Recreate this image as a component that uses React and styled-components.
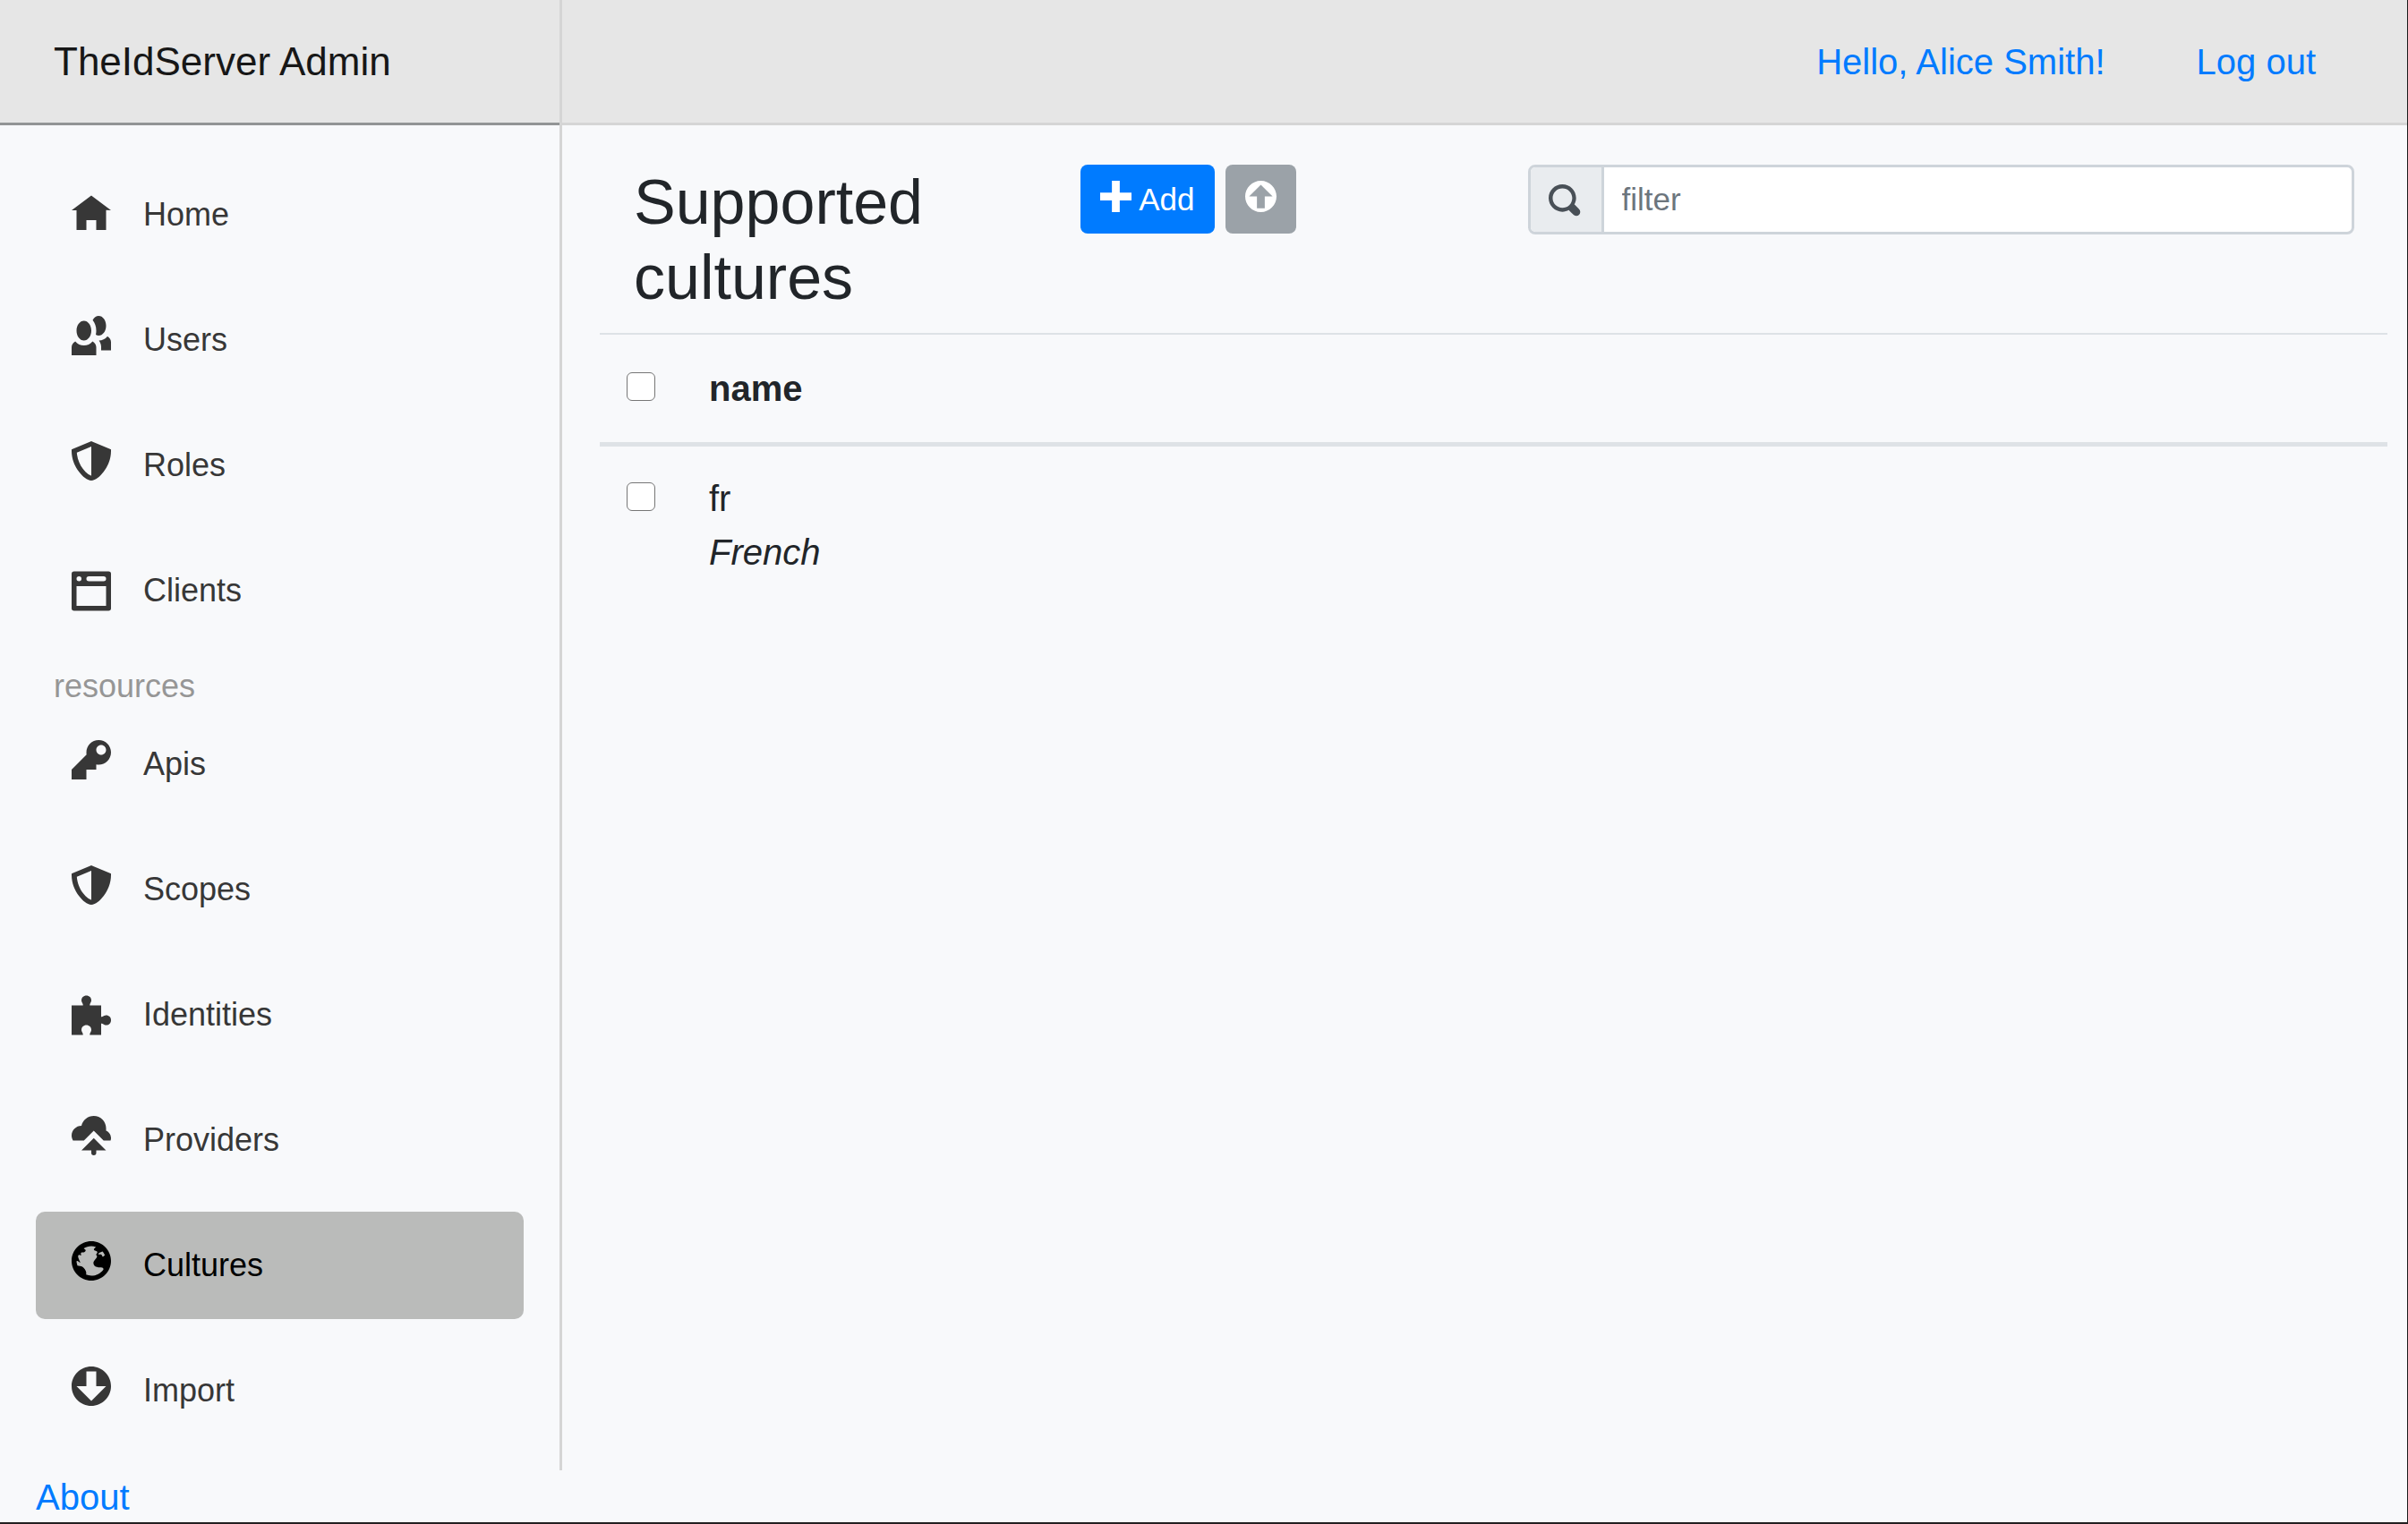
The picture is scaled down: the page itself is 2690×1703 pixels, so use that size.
import React from "react";
import styled, { createGlobalStyle } from "styled-components";

const ICONS = {
  home: "M4 1l-4 3h1v4h2v-2h2v2h2v-4.03l1 .03-4-3z",
  people:
    "M5.5 0c-.51 0-.95.35-1.22.88.45.54.72 1.28.72 2.13 0 .29-.03.55-.09.81.19.11.38.19.59.19.83 0 1.5-.9 1.5-2s-.67-2-1.5-2zm-3 1c-.83 0-1.5.9-1.5 2s.67 2 1.5 2 1.5-.9 1.5-2-.67-2-1.5-2zm4.75 3.16c-.43.51-1.02.82-1.69.84.27.38.44.84.44 1.34v.66h2v-1.66c0-.52-.31-.97-.75-1.19zm-6.5 1c-.44.22-.75.67-.75 1.19v1.66h5v-1.66c0-.52-.31-.97-.75-1.19-.45.53-1.06.84-1.75.84s-1.3-.32-1.75-.84z",
  shield:
    "M4 0l-.19.09-3.5 1.47-.31.13v.31c0 1.66.67 3.12 1.47 4.19.4.53.83.97 1.25 1.28.42.31.83.53 1.28.53.46 0 .86-.22 1.28-.53.42-.31.85-.75 1.25-1.28.8-1.07 1.47-2.53 1.47-4.19v-.31l-.31-.13-3.5-1.47-.19-.09zm0 1.09v5.91c-.04 0-.33-.07-.66-.31s-.71-.63-1.06-1.09c-.64-.85-1.14-2.03-1.22-3.28l2.94-1.22z",
  browser:
    "M.5 1h7a.5.5 0 0 1 .5.5v7a.5.5 0 0 1-.5.5h-7a.5.5 0 0 1-.5-.5v-7a.5.5 0 0 1 .5-.5zM1.5 2a.5.5 0 0 0 0 1 .5.5 0 0 0 0-1zM3.5 2a.5.5 0 0 0 0 1h3a.5.5 0 0 0 0-1zM1 4v4h6v-4z",
  key: "M5.5 0c-1.38 0-2.5 1.12-2.5 2.5 0 .16 0 .32.03.47l-3.03 3.03v2h3v-2h2v-1l.03-.03c.15.03.31.03.47.03 1.38 0 2.5-1.12 2.5-2.5s-1.12-2.5-2.5-2.5zm.5 1c.55 0 1 .45 1 1s-.45 1-1 1-1-.45-1-1 .45-1 1-1z",
  puzzle:
    "M3 1c-.28 0-.54.1-.72.28-.18.18-.28.44-.28.72 0 .28.18.48.28.72.03.06.03.16.03.28h-2.31v6h2.31c0-.12-.01-.22-.03-.28-.1-.24-.28-.44-.28-.72 0-.28.1-.54.28-.72.18-.18.44-.28.72-.28.28 0 .54.1.72.28.18.18.28.44.28.72 0 .28-.18.48-.28.72-.03.06-.03.16-.03.28h2.31v-2.31c.12 0 .22.01.28.03.24.1.44.28.72.28.28 0 .54-.1.72-.28.18-.18.28-.44.28-.72 0-.28-.1-.54-.28-.72-.18-.18-.44-.28-.72-.28-.28 0-.48.18-.72.28-.06.03-.16.03-.28.03v-2.31h-2.31c0-.12.01-.22.03-.28.1-.24.28-.44.28-.72 0-.28-.1-.54-.28-.72-.18-.18-.44-.28-.72-.28z",
  cloudUpload:
    "M4.5 0c-1.21 0-2.27.86-2.5 2-1.1 0-2 .9-2 2 0 .37.11.71.28 1h2.22l2-2 2 2h1.41c.06-.16.09-.32.09-.5 0-.65-.42-1.29-1-1.5v-.5c0-1.38-1.12-2.5-2.5-2.5zm0 4.5l-2.5 2.5h2v.5a.5.5 0 1 0 1 0v-.5h2l-2.5-2.5z",
  globe:
    "M4 0c-2.2 0-4 1.8-4 4s1.8 4 4 4 4-1.8 4-4-1.8-4-4-4zm0 1c.33 0 .64.09.94.19-.21.2-.45.38-.41.56.04.18.69.13.69.5 0 .27-.42.35-.13.66.35.35-.64.98-.66 1.44-.03.83.84.97 1.53.97.42 0 .53.2.5.44-.54.77-1.46 1.25-2.47 1.25-.38 0-.73-.09-1.06-.22.22-.44-.28-1.31-.75-1.59-.23-.23-.72-.14-1-.25-.09-.27-.18-.54-.19-.84.03-.05.08-.09.16-.09.19 0 .45.38.59.34.18-.04-.74-1.31-.31-1.56.2-.12.6.39.47-.16-.12-.51.36-.28.66-.41.26-.11.45-.41.13-.59-.06-.03-.13-.1-.22-.19.45-.27.97-.44 1.53-.44zm2.31 1.09c.18.22.32.46.44.72 0 .01 0 .02 0 .03-.04.07-.11.11-.22.22-.28.28-.32-.21-.44-.31-.13-.12-.6.02-.66-.13-.07-.18.5-.42.88-.53z",
  arrowDown:
    "M4 0c-2.2 0-4 1.8-4 4s1.8 4 4 4 4-1.8 4-4-1.8-4-4-4zm-1 1h2v3h2l-3 3-3-3h2v-3z",
  arrowUp:
    "M4 0c-2.2 0-4 1.8-4 4s1.8 4 4 4 4-1.8 4-4-1.8-4-4-4zm0 1l3 3h-2v3h-2v-3h-2l3-3z",
  plus: "M3 0v3h-3v2h3v3h2v-3h3v-2h-3v-3h-2z",
  search:
    "M3.5 0c-1.93 0-3.5 1.57-3.5 3.5s1.57 3.5 3.5 3.5c.59 0 1.17-.14 1.66-.41a1 1 0 0 0 .13.13l1 1a1.02 1.02 0 1 0 1.44-1.44l-1-1a1 1 0 0 0-.16-.13c.27-.49.44-1.06.44-1.66 0-1.93-1.55-3.5-3.5-3.5zm.03 1c1.39 0 2.5 1.11 2.5 2.5 0 .66-.24 1.27-.66 1.72-.01.01-.02.02-.03.03a1 1 0 0 0-.13.13c-.44.4-1.04.63-1.69.63-1.39 0-2.5-1.11-2.5-2.5s1.11-2.5 2.5-2.5z",
};

const GlobalStyle = createGlobalStyle`
  *, *::before, *::after { box-sizing: border-box; }
  body {
    margin: 0;
    background: #f8f9fb;
    color: #212529;
    font-family: "Liberation Sans", Arial, sans-serif;
    font-size: 40px;
    line-height: 60px;
  }
`;

const Glyph = styled.svg`
  display: block;
  flex: none;
  width: ${(p) => p.$size}px;
  height: ${(p) => p.$size}px;
  overflow: visible;
  fill: currentColor;
`;

function Icon({ name, size = 35 }) {
  return (
    <Glyph $size={size} viewBox="0 0 8 8" aria-hidden="true">
      <path d={ICONS[name]} />
    </Glyph>
  );
}

const Page = styled.div`
  display: flex;
  flex-direction: column;
  min-height: 100vh;
  border-right: 1px solid #1b1b1b;
  border-bottom: 2px solid #231f20;
`;

const Shell = styled.div`
  display: grid;
  grid-template-columns: 628px 1fr;
  flex: 1;
`;

const Sidebar = styled.aside`
  border-right: 3px solid #d5d5d5;
`;

const Brand = styled.div`
  display: flex;
  align-items: center;
  height: 140px;
  padding-left: 60px;
  background: #e6e6e6;
  border-bottom: 3px solid #929495;
`;

const BrandLink = styled.a`
  color: #171717;
  font-size: 44px;
  text-decoration: none;
`;

const Nav = styled.nav`
  padding: 40px 40px 28px;
`;

const NavList = styled.ul`
  display: flex;
  flex-direction: column;
  gap: 20px;
  margin: 0;
  padding: 0;
  list-style: none;
`;

const NavTitle = styled.h2`
  margin: 20px 0 0;
  padding-left: 20px;
  color: #969696;
  font-size: 36px;
  font-weight: 400;
  line-height: 54px;
`;

const NavLink = styled.a`
  display: flex;
  align-items: center;
  height: 120px;
  padding: 0 40px;
  gap: 36px;
  border-radius: 10px;
  background: ${(p) => (p.$active ? "#babbba" : "transparent")};
  color: ${(p) => (p.$active ? "#000" : "#373737")};
  font-size: 36px;
  text-decoration: none;

  svg {
    margin-bottom: 10px;
  }
`;

const Main = styled.main`
  min-width: 0;
`;

const TopBar = styled.header`
  display: flex;
  align-items: center;
  justify-content: flex-end;
  gap: 102px;
  height: 140px;
  padding-right: 102px;
  background: #e6e6e6;
  border-bottom: 3px solid #d5d5d5;
`;

const TextLink = styled.a`
  color: #007bff;
  text-decoration: none;
`;

const Content = styled.div`
  padding: 44px 22px 44px 42px;
`;

const Toolbar = styled.div`
  display: grid;
  grid-template-columns: 1fr 1fr 2fr;
  align-items: start;
  margin-bottom: 20px;
`;

const ToolbarCell = styled.div`
  display: flex;
  gap: 12px;
  padding: 0 37px 0 38px;
`;

const Title = styled.h1`
  margin: 0;
  font-size: 70px;
  font-weight: 400;
  line-height: 84px;
`;

const Button = styled.button`
  display: flex;
  align-items: center;
  gap: 8px;
  height: 77px;
  padding: 0 22px;
  border: 0;
  border-radius: 8px;
  background: ${(p) => (p.$primary ? "#007bff" : "#9ba2a8")};
  color: #fff;
  font: inherit;
  font-size: 35px;

  svg {
    margin-bottom: 6px;
  }
`;

const FilterGroup = styled.div`
  display: flex;
  flex: 1;
  height: 78px;
  overflow: hidden;
  border: 3px solid #ced4da;
  border-radius: 8px;
  background: #fff;
`;

const FilterLabel = styled.label`
  display: flex;
  align-items: center;
  padding: 0 24px 0 20px;
  border-right: 3px solid #ced4da;
  background: #e9ecef;
  color: #495057;
`;

const FilterInput = styled.input`
  flex: 1;
  min-width: 0;
  padding: 0 20px;
  border: 0;
  outline: 0;
  background: transparent;
  color: #495057;
  font: inherit;
  font-size: 35px;

  &::placeholder {
    color: #6c757d;
    opacity: 1;
  }
`;

const Table = styled.table`
  width: 100%;
  border-collapse: separate;
  border-spacing: 0;
`;

const HeadCell = styled.th`
  width: ${(p) => (p.$narrow ? "92px" : "auto")};
  padding: 30px;
  border-top: 2px solid #dee2e6;
  border-bottom: 5px solid #dee2e6;
  text-align: left;
  vertical-align: top;
`;

const Cell = styled.td`
  padding: 28px 30px;
  vertical-align: top;
`;

const CheckBox = styled.input`
  appearance: none;
  display: block;
  width: 32px;
  height: 32px;
  margin: 12px 0 0;
  border: 1px solid #767676;
  border-radius: 6px;
  background: #fff;

  &:checked {
    background: #007bff;
  }
`;

const Footer = styled.footer`
  height: 58px;
  padding-left: 40px;
`;

const mainItems = [
  ["Home", "home"],
  ["Users", "people"],
  ["Roles", "shield"],
  ["Clients", "browser"],
];

const resourceItems = [
  ["Apis", "key"],
  ["Scopes", "shield"],
  ["Identities", "puzzle"],
  ["Providers", "cloudUpload"],
  ["Cultures", "globe"],
  ["Import", "arrowDown"],
];

const cultures = [{ id: "fr", name: "French" }];

function NavItems({ items, active }) {
  return (
    <NavList>
      {items.map(([label, icon]) => (
        <li key={label}>
          <NavLink
            href="#"
            $active={label === active}
            aria-current={label === active ? "page" : undefined}
          >
            <Icon name={icon} size={44} />
            {label}
          </NavLink>
        </li>
      ))}
    </NavList>
  );
}

export default function App() {
  return (
    <>
      <GlobalStyle />
      <Page>
        <Shell>
          <Sidebar>
            <Brand>
              <BrandLink href="#">TheIdServer Admin</BrandLink>
            </Brand>
            <Nav>
              <NavItems items={mainItems} active="Cultures" />
              <NavTitle>resources</NavTitle>
              <NavItems items={resourceItems} active="Cultures" />
            </Nav>
          </Sidebar>
          <Main>
            <TopBar>
              <TextLink href="#">Hello, Alice Smith!</TextLink>
              <TextLink href="#">Log out</TextLink>
            </TopBar>
            <Content>
              <Toolbar>
                <ToolbarCell>
                  <Title>Supported cultures</Title>
                </ToolbarCell>
                <ToolbarCell>
                  <Button type="button" $primary>
                    <Icon name="plus" />
                    Add
                  </Button>
                  <Button type="button" aria-label="Export">
                    <Icon name="arrowUp" />
                  </Button>
                </ToolbarCell>
                <ToolbarCell>
                  <FilterGroup>
                    <FilterLabel htmlFor="filter" aria-label="filter">
                      <Icon name="search" />
                    </FilterLabel>
                    <FilterInput id="filter" type="text" placeholder="filter" />
                  </FilterGroup>
                </ToolbarCell>
              </Toolbar>
              <Table>
                <thead>
                  <tr>
                    <HeadCell $narrow>
                      <CheckBox type="checkbox" aria-label="Select all" />
                    </HeadCell>
                    <HeadCell>name</HeadCell>
                  </tr>
                </thead>
                <tbody>
                  {cultures.map((culture) => (
                    <tr key={culture.id}>
                      <Cell>
                        <CheckBox
                          type="checkbox"
                          aria-label={`Select ${culture.id}`}
                        />
                      </Cell>
                      <Cell>
                        {culture.id}
                        <br />
                        <em>{culture.name}</em>
                      </Cell>
                    </tr>
                  ))}
                </tbody>
              </Table>
            </Content>
          </Main>
        </Shell>
        <Footer>
          <TextLink href="#">About</TextLink>
        </Footer>
      </Page>
    </>
  );
}
